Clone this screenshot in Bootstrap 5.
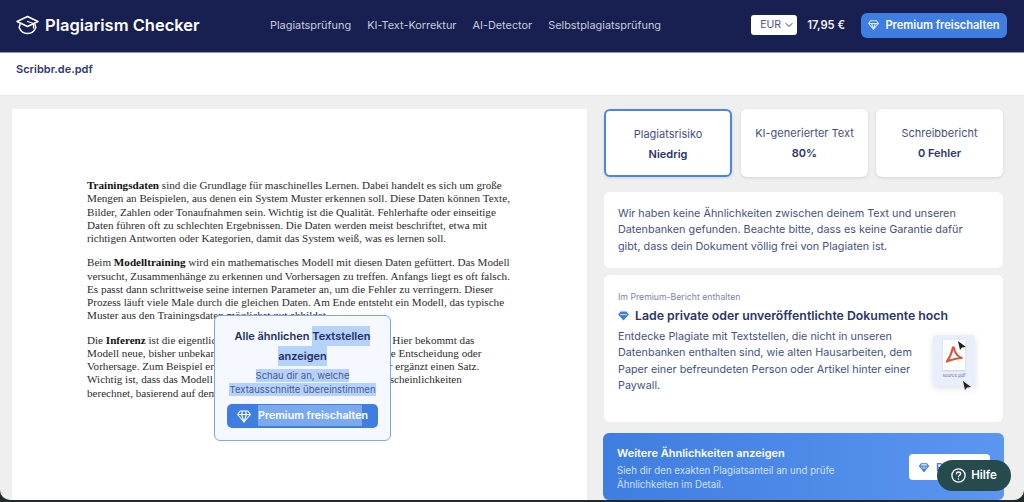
<!DOCTYPE html>
<html lang="de">
<head>
<meta charset="utf-8">
<title>Plagiarism Checker</title>
<link href="https://cdn.jsdelivr.net/npm/bootstrap@5.3.0/dist/css/bootstrap.min.css" rel="stylesheet">
<style>
html,body{height:502px;overflow:hidden}
body{font-family:Inter,"Liberation Sans",sans-serif;background:#efefef;color:#46517f}
.topbar{height:53px;background:#172050;border-bottom:1px solid #8f93ad;padding:0 17px 2px 16px}
.brand-name{font-size:16.5px;font-weight:600;color:#fff;margin-left:6px}
.brand-wrap{width:254px}
.top-link{font-size:10.9px;color:#c9cbdc;text-decoration:none;margin-right:16px}
.cur-select{width:46px;height:20px;font-size:10.5px;color:#4a5280;padding:0 0 0 9px;border-radius:3px;border:0;background-position:right 3px center;background-size:10px 8px}
.price{font-size:11.2px;font-weight:600;color:#f2f3f8;margin:0 16px 0 10px}
.unlock{background:#3f7de0;color:#fff;font-size:11.1px;font-weight:600;border:0;border-radius:6px;height:25px;width:146px;padding:0;gap:6px}
.unlock:hover{background:#3f7de0;color:#fff}
.filebar{height:43px;background:#fff;border-bottom:1px solid #e8e8e8;padding:10px 16px 0;font-size:11px;font-weight:600;color:#2e3a6f;line-height:13px}
.work{padding:13px 0 0 12px;gap:16px}
.paper{width:575px;height:400px;background:#fff;padding:70px 0 0 75px;flex:none;font-family:"Liberation Serif",serif;font-size:11.12px;line-height:13.25px;color:#2c2c2c;white-space:nowrap}
.paper p{margin:0 0 11px}
.paper b{color:#111}
.upsell{position:absolute;left:202px;top:206px;width:177px;height:126px;background:#f5f8ff;border:1px solid #7aa9ef;border-radius:6px;font-family:Inter,sans-serif;text-align:center;padding-top:11px;white-space:normal}
.upsell-title{font-size:11px;font-weight:600;line-height:19.5px;color:#232e66}
.upsell-sub{font-size:9.55px;line-height:14px;color:#4a5890;margin-top:3px}
.hl{background:#b5d2fb;padding:3px 0;-webkit-box-decoration-break:clone;box-decoration-break:clone}
.upsell-sub .hl{padding:1px 0}
.upsell-btn{margin:7px auto 0;width:151px;height:24px;background:#3f7de0;color:#fff;border-radius:5px;font-size:10.7px;font-weight:600;padding-left:10px;gap:7px}
.hl-btn{background:#7aa9ef;padding:4px 0}
.side{width:400px;flex:none}
.tabs{margin-left:1px;margin-bottom:15px}
.tabbox{height:68px;background:#fff;border-radius:6px;box-shadow:0 1px 3px rgba(40,50,90,.14);font-size:11px;text-align:center;padding-top:17px;line-height:15px}
.tabbox strong{display:block;margin-top:5px;font-weight:600;color:#2a3568;font-size:11px}
.tab-a{width:128px;border:2px solid #4a86e8;padding-top:16px;margin-right:9px}
.tab-b{width:127px}
.tab-c{margin-left:8px}
.panel{background:#fff;border-radius:6px;margin-left:1px;width:399px;padding:0 14px;font-size:10.8px;line-height:16.3px}
.panel-info{height:76px;padding:14px 30px 0 14px;margin-bottom:7px}
.panel-pro{height:147px;padding-top:16px;margin-bottom:11px}
.pro-tag{font-size:8.7px;line-height:12px;color:#7e84a5}
.pro-head{font-size:12.3px;font-weight:600;color:#2a3568;margin:4px 0 4px;line-height:18px;gap:6px;white-space:nowrap}
.pro-text{width:300px}
.thumb{width:42px;height:51px;background:#e9effa;border-radius:4px;box-shadow:0 2px 6px rgba(60,80,130,.18);margin-top:6px;margin-left:15px;padding-top:5px;position:relative}
.thumb-page{width:22px;height:30px;background:#fff;margin:0 auto;box-shadow:0 1px 2px rgba(60,80,130,.2)}
.thumb-name{font-size:4.5px;line-height:6px;color:#6a7192;text-align:center;margin-top:3px}
.cursor-a,.cursor-b{position:absolute}
.cursor-a{left:25px;top:6px}
.cursor-b{left:30px;top:46px}
.cta{width:401px;height:67px;border-radius:6px;background:linear-gradient(90deg,#3f7de0,#5b96f0);color:#fff;padding:12px 14px 0;position:relative}
.cta-title{font-size:11px;font-weight:600;line-height:16px}
.cta-text{font-size:9.7px;line-height:14px;color:#cfe0fb;margin-top:3px}
.cta-btn{position:absolute;left:306px;top:21px;width:81px;height:26px;background:#fff;border-radius:4px;color:#3f7de0;font-size:11px;font-weight:600;padding-left:10px;gap:7px;white-space:nowrap;overflow:hidden}
.help{position:fixed;left:937px;top:460px;width:74px;height:31px;border-radius:16px;background:#264b4f;color:#fff;font-size:11.5px;font-weight:600;gap:5px}
.frame{position:fixed;left:0;right:0;top:-30px;bottom:2px;border-radius:0 0 10px 10px;box-shadow:0 0 0 20px #23282a;pointer-events:none}
</style>
</head>
<body>
<nav class="topbar d-flex align-items-center">
  <div class="brand-wrap d-flex align-items-center flex-none">
    <svg width="23" height="20" viewBox="0 0 23 20" fill="none" stroke="#fff" stroke-width="1.5" stroke-linejoin="round" stroke-linecap="round"><path d="M11.5 1.5 22 6.5 11.5 11.5 1 6.5Z"/><path d="M4 9.5 3.2 12.5C5 17 8 18.5 11.5 18.5S18 17 19.8 12.5L19 9.5"/><path d="M11.5 6.5 17.5 8.5V13" stroke-width="1.3"/></svg>
    <span class="brand-name">Plagiarism Checker</span>
  </div>
  <a class="top-link" href="#">Plagiatsprüfung</a>
  <a class="top-link" href="#">KI-Text-Korrektur</a>
  <a class="top-link" href="#">AI-Detector</a>
  <a class="top-link" href="#">Selbstplagiatsprüfung</a>
  <select class="form-select cur-select ms-auto" aria-label="Währung"><option>EUR</option></select>
  <span class="price">17,95 €</span>
  <button class="btn unlock d-flex align-items-center justify-content-center">
    <svg width="11" height="10" viewBox="0 0 14 13" fill="none" stroke="#dce8fb" stroke-width="1.4" stroke-linejoin="round"><path d="M3.2 1h7.6L13.4 4.5 7 12 .6 4.5Z"/><path d="M.6 4.5h12.8M4.6 4.5 7 12l2.4-7.5"/></svg>Premium freischalten
  </button>
</nav>
<div class="filebar">Scribbr.de.pdf</div>
<main class="work d-flex">
  <section class="paper position-relative">
    <p><b>Trainingsdaten</b> sind die Grundlage für maschinelles Lernen. Dabei handelt es sich um große<br>Mengen an Beispielen, aus denen ein System Muster erkennen soll. Diese Daten können Texte,<br>Bilder, Zahlen oder Tonaufnahmen sein. Wichtig ist die Qualität. Fehlerhafte oder einseitige<br>Daten führen oft zu schlechten Ergebnissen. Die Daten werden meist beschriftet, etwa mit<br>richtigen Antworten oder Kategorien, damit das System weiß, was es lernen soll.</p>
    <p>Beim <b>Modelltraining</b> wird ein mathematisches Modell mit diesen Daten gefüttert. Das Modell<br>versucht, Zusammenhänge zu erkennen und Vorhersagen zu treffen. Anfangs liegt es oft falsch.<br>Es passt dann schrittweise seine internen Parameter an, um die Fehler zu verringern. Dieser<br>Prozess läuft viele Male durch die gleichen Daten. Am Ende entsteht ein Modell, das typische<br>Muster aus den Trainingsdaten möglichst gut abbildet.</p>
    <p>Die <b>Inferenz</b> ist die eigentliche Verwendung des Modells im Alltag. Hier bekommt das<br>Modell neue, bisher unbekannte Daten und trifft auf dieser Basis eine Entscheidung oder<br>Vorhersage. Zum Beispiel erkennt es ein Objekt auf einem Foto oder ergänzt einen Satz.<br>Wichtig ist, dass das Modell keine feste Antwort gibt, sondern Wahrscheinlichkeiten<br>berechnet, basierend auf dem Training.</p>
    <div class="upsell">
      <div class="upsell-title">Alle ähnlichen <span class="hl">Textstellen<br>anzeigen</span></div>
      <div class="upsell-sub"><span class="hl">Schau dir an, welche<br>Textausschnitte übereinstimmen</span></div>
      <div class="upsell-btn d-flex align-items-center">
        <svg width="14" height="13" viewBox="0 0 14 13" fill="none" stroke="#fff" stroke-width="1.1" stroke-linejoin="round"><path d="M3.2 1h7.6L13.4 4.5 7 12 .6 4.5Z"/><path d="M.6 4.5h12.8M4.6 4.5 7 12l2.4-7.5M4.6 4.5 5.5 1M9.4 4.5 8.5 1"/></svg>
        <span><span class="hl-btn">Premium freischalte</span>n</span>
      </div>
    </div>
  </section>
  <aside class="side">
    <div class="tabs d-flex">
      <div class="tabbox tab-a">Plagiatsrisiko<strong>Niedrig</strong></div>
      <div class="tabbox tab-b">KI-generierter Text<strong>80%</strong></div>
      <div class="tabbox tab-b tab-c">Schreibbericht<strong>0 Fehler</strong></div>
    </div>
    <div class="panel panel-info">Wir haben keine Ähnlichkeiten zwischen deinem Text und unseren Datenbanken gefunden. Beachte bitte, dass es keine Garantie dafür gibt, dass dein Dokument völlig frei von Plagiaten ist.</div>
    <div class="panel panel-pro">
      <div class="pro-tag">Im Premium-Bericht enthalten</div>
      <div class="pro-head d-flex align-items-center">
        <svg width="11" height="10" viewBox="0 0 14 13"><path d="M3.2.5h7.6L14 4.5 7 12.5 0 4.5Z" fill="#3f7de0"/><path d="M2.5 4.7h9" stroke="#fff" stroke-width="1"/></svg>Lade private oder unveröffentlichte Dokumente hoch
      </div>
      <div class="d-flex">
        <div class="pro-text">Entdecke Plagiate mit Textstellen, die nicht in unseren Datenbanken enthalten sind, wie alten Hausarbeiten, dem Paper einer befreundeten Person oder Artikel hinter einer Paywall.</div>
        <div class="thumb flex-shrink-0">
          <div class="thumb-page d-flex align-items-center justify-content-center">
            <svg width="18" height="18" viewBox="0 0 15 15" fill="none" stroke="#d9573f" stroke-width="1.7" stroke-linejoin="round"><path d="M6.5 1.5C5.8 5 4.5 9 1.5 13 4 12 9 10 14 10 10.5 8.5 8 5 7.5 1.5 7.2.8 6.7.8 6.5 1.5Z"/></svg>
          </div>
          <div class="thumb-name">source.pdf</div>
          <svg class="cursor-a" width="8" height="9" viewBox="0 0 8 9"><path d="M0 0 8 6 4 6.5 2 9Z" fill="#222"/></svg>
          <svg class="cursor-b" width="8" height="9" viewBox="0 0 8 9"><path d="M0 0 8 6 4 6.5 2 9Z" fill="#222"/></svg>
        </div>
      </div>
    </div>
    <div class="cta">
      <div class="cta-title">Weitere Ähnlichkeiten anzeigen</div>
      <div class="cta-text">Sieh dir den exakten Plagiatsanteil an und prüfe<br>Ähnlichkeiten im Detail.</div>
      <div class="cta-btn d-flex align-items-center">
        <svg width="10" height="9" viewBox="0 0 14 13" fill="none" stroke="#3f7de0" stroke-width="1.6" stroke-linejoin="round"><path d="M3.2 1h7.6L13.4 4.5 7 12 .6 4.5Z"/><path d="M.6 4.5h12.8M4.6 4.5 7 12l2.4-7.5"/></svg>Premium
      </div>
    </div>
  </aside>
</main>
<div class="help d-flex align-items-center justify-content-center">
  <svg width="15" height="15" viewBox="0 0 15 15" fill="none" stroke="#fff" stroke-width="1.3" stroke-linecap="round"><circle cx="7.5" cy="7.5" r="6.6"/><path d="M5.4 5.8C5.5 4.6 6.4 4 7.5 4S9.6 4.7 9.6 5.8C9.6 7.3 7.5 7.3 7.5 8.8"/><path d="M7.5 11v.2"/></svg>
  Hilfe
</div>
<div class="frame"></div>
</body>
</html>
